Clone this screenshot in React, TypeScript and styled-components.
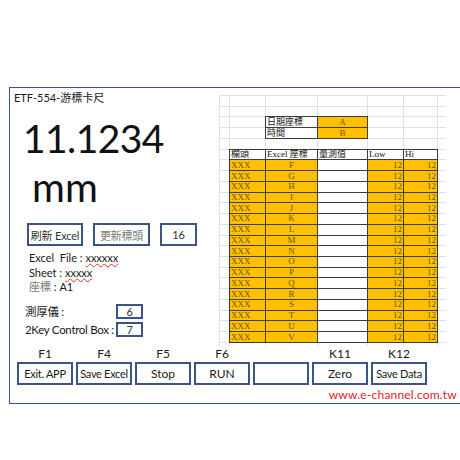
import styled, { createGlobalStyle } from 'styled-components';

const GlobalStyle = createGlobalStyle`
  html, body {
    margin: 0;
    padding: 0;
    background: #ffffff;
    overflow: hidden;
  }
  body {
    font-family: Lato, "Noto Sans CJK TC", sans-serif;
    color: #1a1a1a;
  }
`;

const Page = styled.div`
  width: 460px;
  height: 460px;
  padding: 87px 0 0 9px;
  box-sizing: border-box;
  overflow: hidden;
`;

const Frame = styled.div`
  width: 470px;
  height: 317px;
  box-sizing: border-box;
  border: 1px solid #33538a;
  display: flex;
  flex-direction: column;
`;

const TopArea = styled.div`
  display: flex;
  height: 259px;
`;

const LeftPanel = styled.div`
  width: 209px;
  display: flex;
  flex-direction: column;
`;

const Title = styled.div`
  font-size: 11px;
  line-height: 14px;
  margin: 3px 0 0 4px;
  color: #1a1a1a;
`;

const Reading = styled.div`
  font-size: 39px;
  line-height: 44px;
  margin: 11px 0 0 13px;
  letter-spacing: -0.6px;
  color: #111;
`;

const Unit = styled.div`
  font-size: 40px;
  line-height: 44px;
  margin: 5px 0 0 22px;
  color: #111;
`;

const ActionRow = styled.div`
  display: flex;
  gap: 10px;
  margin: 14px 0 0 17px;
`;

const BoxButton = styled.div<{ $w: number; $h?: number; $muted?: boolean }>`
  width: ${p => p.$w}px;
  height: ${p => p.$h ?? 23}px;
  box-sizing: border-box;
  border: 2px solid #3a5484;
  display: flex;
  align-items: center;
  justify-content: center;
  font-size: 11px;
  letter-spacing: -0.2px;
  color: ${p => (p.$muted ? '#7a7a7a' : '#333')};
  white-space: nowrap;
`;

const Info = styled.div`
  margin: 5px 0 0 19px;
  font-size: 11px;
  line-height: 14.5px;
  white-space: nowrap;
`;

const Squiggle = styled.span`
  text-decoration: underline wavy #e03030;
  text-decoration-thickness: 1px;
  text-underline-offset: 1px;
`;

const Faint = styled.span`
  color: #777;
`;

const DeviceList = styled.div`
  margin: 9px 0 0 15px;
  display: grid;
  grid-template-columns: 91px 27px;
  row-gap: 3px;
  align-items: center;
`;

const DeviceLabel = styled.div`
  font-size: 11.5px;
  line-height: 15px;
  letter-spacing: -0.3px;
  white-space: nowrap;
`;

const Sheet = styled.div`
  margin-top: 7px;
  align-self: flex-start;
  display: grid;
  grid-template-columns: 9px 35px 51px 49px 35px 33px 8px;
  grid-template-rows: repeat(23, 9.74px) 3px;
  gap: 1px;
  padding: 1px 0 0 1px;
  background: #dde2ea;
`;

const Blank = styled.div`
  background: #ffffff;
`;

const SheetTable = styled.div<{ $col: string; $row: string; $cols: string; $rows: number }>`
  grid-column: ${p => p.$col};
  grid-row: ${p => p.$row};
  margin: -1px;
  border: 1px solid #3c3c3c;
  background: #3c3c3c;
  display: grid;
  grid-template-columns: ${p => p.$cols};
  grid-template-rows: repeat(${p => p.$rows}, 1fr);
  gap: 1px;
`;

const Cell = styled.div<{ $fill?: boolean; $align?: 'left' | 'center' | 'right'; $head?: boolean }>`
  background: ${p => (p.$fill ? '#ffc000' : '#ffffff')};
  font-family: "Liberation Serif", "Noto Sans CJK TC", serif;
  font-size: 9px;
  line-height: 9px;
  color: ${p => (p.$head ? '#111' : '#6e5300')};
  display: flex;
  align-items: center;
  justify-content: ${p => (p.$align === 'center' ? 'center' : p.$align === 'right' ? 'flex-end' : 'flex-start')};
  padding: 0 1px;
  overflow: hidden;
  white-space: nowrap;
`;

const BottomArea = styled.div`
  display: flex;
  flex-direction: column;
  padding-left: 7px;
`;

const KeyGrid = styled.div`
  display: grid;
  grid-template-columns: repeat(7, 56px);
  grid-template-rows: 14px 23px;
  column-gap: 3px;
  row-gap: 1px;
  margin-top: 0;
`;

const KeyLabel = styled.div`
  font-size: 12px;
  line-height: 14px;
  text-align: center;
  color: #1a1a1a;
`;

const KeyButton = styled.div<{ $small?: boolean }>`
  box-sizing: border-box;
  border: 2px solid #3a5484;
  display: flex;
  align-items: center;
  justify-content: center;
  font-size: ${p => (p.$small ? '11px' : '12px')};
  letter-spacing: ${p => (p.$small ? '-0.3px' : '0')};
  color: #1a1a1a;
  white-space: nowrap;
`;

const Url = styled.div`
  font-size: 12px;
  line-height: 14px;
  color: #e8162e;
  text-align: right;
  padding-right: 21px;
  margin-top: 3px;
  letter-spacing: 0.2px;
`;

const letters = 'FGHIJKLMNOPQRSTUV'.split('');

const keys = [
  { key: 'F1', label: 'Exit. APP', small: true },
  { key: 'F4', label: 'Save Excel', small: true },
  { key: 'F5', label: 'Stop' },
  { key: 'F6', label: 'RUN' },
  { key: '', label: '' },
  { key: 'K11', label: 'Zero' },
  { key: 'K12', label: 'Save Data', small: true },
];

const App = () => {
  const occupied = 2 * 2 + 18 * 5;
  const blanks = Array.from({ length: 24 * 7 - occupied });

  return (
    <>
      <GlobalStyle />
      <Page>
        <Frame>
          <TopArea>
            <LeftPanel>
              <Title>ETF-554-游標卡尺</Title>
              <Reading>11.1234</Reading>
              <Unit>mm</Unit>
              <ActionRow>
                <BoxButton $w={56}>刷新 Excel</BoxButton>
                <BoxButton $w={57} $muted>更新標頭</BoxButton>
                <BoxButton $w={37}>16</BoxButton>
              </ActionRow>
              <Info>
                <div>Excel&nbsp; File : <Squiggle>xxxxxx</Squiggle></div>
                <div>Sheet : <Squiggle>xxxxx</Squiggle></div>
                <div><Faint>座標</Faint> : A1</div>
              </Info>
              <DeviceList>
                <DeviceLabel>測厚儀 :</DeviceLabel>
                <BoxButton $w={27} $h={15}>6</BoxButton>
                <DeviceLabel>2Key Control Box :</DeviceLabel>
                <BoxButton $w={27} $h={15}>7</BoxButton>
              </DeviceList>
            </LeftPanel>

            <Sheet>
              <SheetTable $col="3 / span 2" $row="3 / span 2" $cols="51px 49px" $rows={2}>
                <Cell $head>日期座標</Cell>
                <Cell $fill $align="center">A</Cell>
                <Cell $head>時間</Cell>
                <Cell $fill $align="center">B</Cell>
              </SheetTable>
              <SheetTable $col="2 / span 5" $row="6 / span 18" $cols="35px 51px 49px 35px 33px" $rows={18}>
                <Cell $head>欄頭</Cell>
                <Cell $head>Excel 座標</Cell>
                <Cell $head>量測值</Cell>
                <Cell $head>Low</Cell>
                <Cell $head>Hi</Cell>
                {letters.map(letter => [
                  <Cell key={`a${letter}`} $fill>XXX</Cell>,
                  <Cell key={`b${letter}`} $fill $align="center">{letter}</Cell>,
                  <Cell key={`c${letter}`} />,
                  <Cell key={`d${letter}`} $fill $align="right">12</Cell>,
                  <Cell key={`e${letter}`} $fill $align="right">12</Cell>,
                ])}
              </SheetTable>
              {blanks.map((_, i) => (
                <Blank key={i} />
              ))}
            </Sheet>
          </TopArea>

          <BottomArea>
            <KeyGrid>
              {keys.map((k, i) => (
                <KeyLabel key={`l${i}`}>{k.key}</KeyLabel>
              ))}
              {keys.map((k, i) => (
                <KeyButton key={`b${i}`} $small={k.small}>{k.label}</KeyButton>
              ))}
            </KeyGrid>
            <Url>www.e-channel.com.tw</Url>
          </BottomArea>
        </Frame>
      </Page>
    </>
  );
};

export default App;
